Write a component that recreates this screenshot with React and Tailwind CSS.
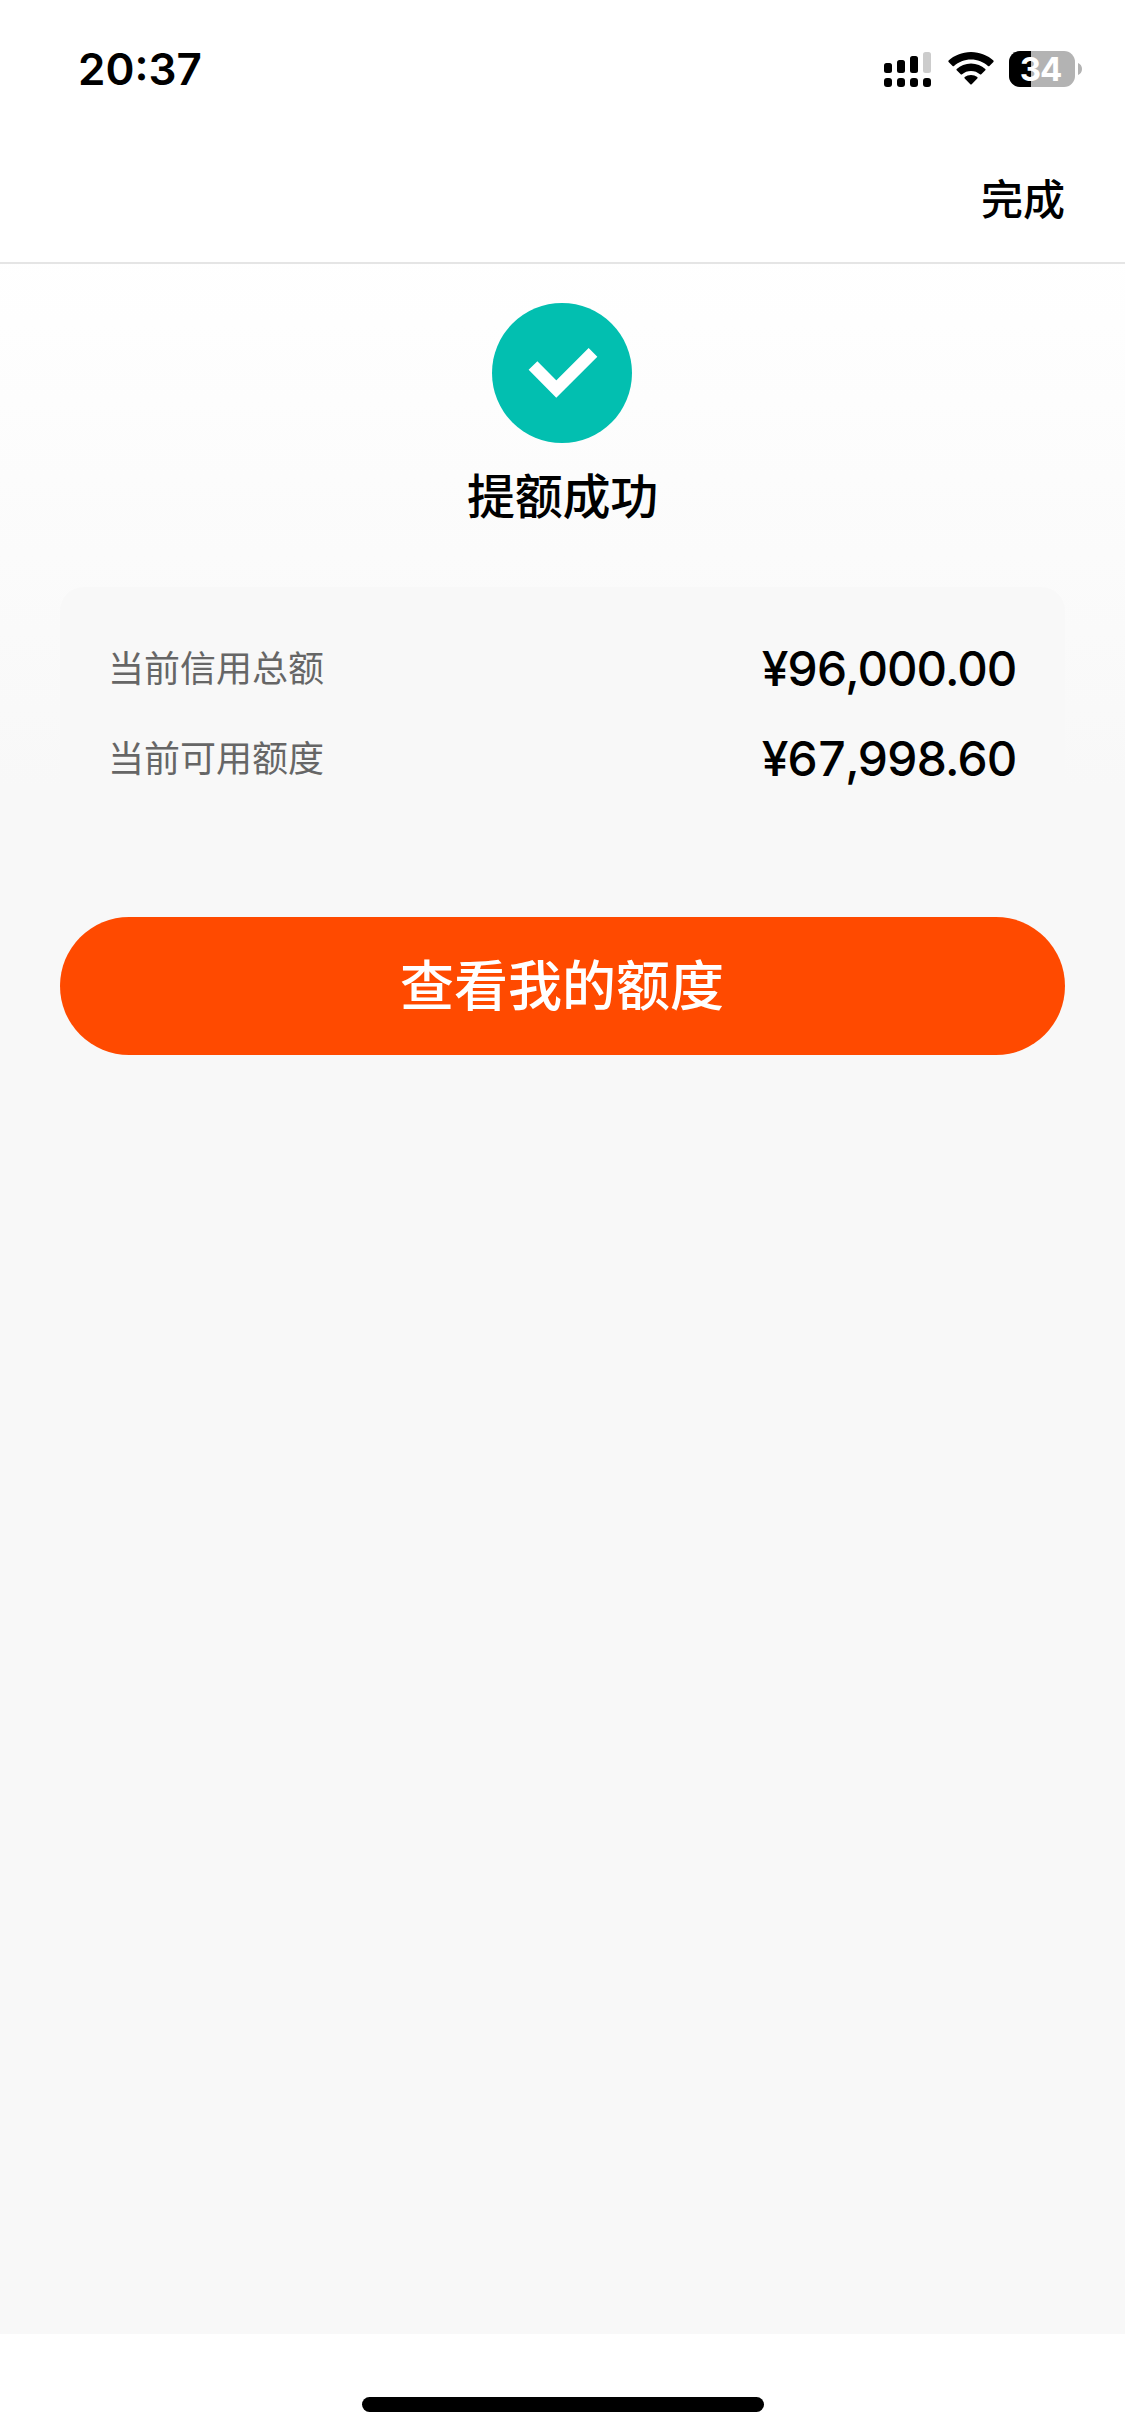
import React from "react";

const SignalIcon = () => (
  <svg width="47" height="37" viewBox="0 0 47 37" className="mr-[17px]">
    <rect x="0" y="12" width="8" height="10" rx="2.5" />
    <rect x="13" y="9" width="8" height="13" rx="2.5" />
    <rect x="26" y="5" width="8" height="17" rx="2.5" />
    <rect x="39" y="1" width="8" height="21" rx="2.5" fill="#cccccc" />
    <rect x="0" y="27" width="8" height="9" rx="3" />
    <rect x="13" y="27" width="8" height="9" rx="3" />
    <rect x="26" y="27" width="8" height="9" rx="3" />
    <rect x="39" y="27" width="8" height="9" rx="3" />
  </svg>
);

const WifiIcon = () => (
  <svg width="46" height="37" viewBox="0 0 46 37" className="mr-[15px]">
    <path d="M23 1C14 1 6 4.500 0.600 9.600Q0 10.300 0.600 11L4.600 15Q5.300 15.600 6 15C10.500 10.900 16.500 8.500 23 8.500S35.500 10.900 40 15Q40.700 15.600 41.400 15L45.400 11Q46 10.300 45.400 9.600C40 4.500 32 1 23 1Z" />
    <path d="M23 12.500C17.400 12.500 12.400 14.600 8.700 17.900Q8 18.600 8.700 19.300L12.700 23.200Q13.400 23.800 14.100 23.200C16.500 21.100 19.600 19.900 23 19.900S29.500 21.100 31.900 23.200Q32.600 23.800 33.300 23.200L37.300 19.300Q38 18.600 37.300 17.900C33.600 14.600 28.600 12.500 23 12.500Z" />
    <path d="M23 24C20.600 24 18.500 24.800 16.700 26.100Q16 26.800 16.700 27.500L22.300 33.300Q23 33.900 23.700 33.300L29.300 27.500Q30 26.800 29.300 26.100C27.500 24.800 25.400 24 23 24Z" />
  </svg>
);

const Battery = ({ level }) => (
  <div className="flex items-center">
    <div className="relative flex h-9 w-[66px] items-center justify-center rounded-[11px] bg-[#b3b3b3]">
      <div className="absolute inset-y-0 left-0 rounded-l-[11px] bg-black" style={{ width: `${level}%` }} />
      <span className="relative mr-[3px] text-[33px] leading-[42px] font-bold tracking-[-1px] text-white">
        {level}
      </span>
    </div>
    <svg width="4" height="12" viewBox="0 0 4 12" className="ml-[3px]">
      <path d="M0 0C2.500 1 4 3.300 4 6S2.500 11 0 12Z" fill="#b3b3b3" />
    </svg>
  </div>
);

const StatusBar = () => (
  <div className="flex h-[138px] items-center justify-between pr-[43px] pl-[78px]">
    <span className="text-[44px] leading-[54px] font-semibold">20:37</span>
    <div className="flex items-center">
      <SignalIcon />
      <WifiIcon />
      <Battery level={34} />
    </div>
  </div>
);

const SuccessIcon = () => (
  <svg width="140" height="140" viewBox="0 0 140 140" className="mr-px">
    <circle cx="70" cy="70" r="70" fill="#02bfb0" />
    <path d="M41 62.500L64.300 86L101 49.300" fill="none" stroke="#fff" strokeWidth="12.300" />
  </svg>
);

const AmountRow = ({ label, amount }) => (
  <div className="flex h-[90px] items-center justify-between">
    <span className="text-4xl text-[#666666]">{label}</span>
    <span className="text-[48px] leading-[60px] font-medium tracking-[-1.6px] tabular-nums">{amount}</span>
  </div>
);

const rows = [
  { label: "当前信用总额", amount: "¥96,000.00" },
  { label: "当前可用额度", amount: "¥67,998.60" },
];

const App = () => {
  return (
    <div className="flex h-[2436px] w-[1125px] flex-col bg-white font-['Inter','Noto_Sans_CJK_SC',sans-serif] text-black">
      <StatusBar />
      <header className="flex h-[126px] items-center justify-end border-b-2 border-[#e5e5e5] px-[60px]">
        <button className="text-[42px] leading-[60px] font-medium">完成</button>
      </header>
      <main className="flex flex-1 flex-col items-center bg-[#f8f8f8] bg-[linear-gradient(to_bottom,#ffffff_-19px,#f8f8f8_522px)] px-[60px] pt-[39px]">
        <SuccessIcon />
        <h1 className="mt-[18px] text-5xl leading-[72px] font-medium tracking-[-0.3px]">提额成功</h1>
        <section className="mt-[54px] w-full rounded-[24px] bg-[#f8f8f8] pt-[37px] pr-[49px] pb-[35px] pl-[48px]">
          {rows.map((row) => (
            <AmountRow key={row.label} label={row.label} amount={row.amount} />
          ))}
        </section>
        <button className="mt-[78px] h-[138px] w-full rounded-full bg-[#ff4a00] pr-px text-[54px] font-medium text-white">
          查看我的额度
        </button>
      </main>
      <footer className="flex h-[102px] items-end justify-center bg-white pb-6">
        <div className="h-[15px] w-[402px] rounded-full bg-black" />
      </footer>
    </div>
  );
};

export default App;
